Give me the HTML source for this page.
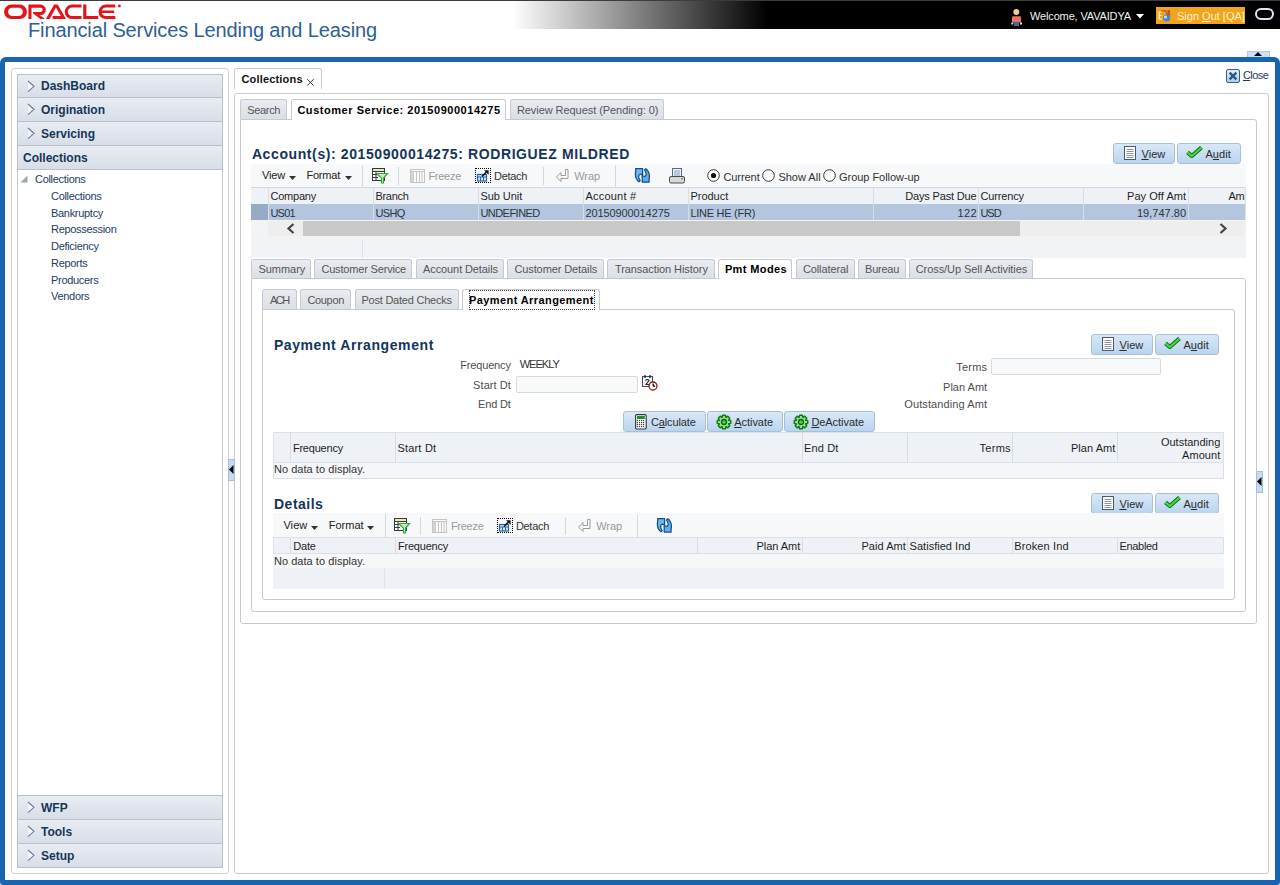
<!DOCTYPE html>
<html><head><meta charset="utf-8">
<style>
*{box-sizing:border-box;margin:0;padding:0}
html,body{width:1280px;height:885px;overflow:hidden;background:#fff;font-family:"Liberation Sans",sans-serif;font-size:11px;color:#333}
.a{position:absolute}
.t{position:absolute;white-space:nowrap;line-height:13px;font-size:11px}
.b{font-weight:bold}
.bx{position:absolute;border:1px solid #c9c9c9}
.hdr{position:absolute;left:17px;width:206px;height:25px;border:1px solid #b7bec8;background:linear-gradient(#e6eaf1,#d8dee8);}
.hdr .tx{position:absolute;left:23px;top:5px;font-weight:bold;font-size:12px;color:#1b3a5e;line-height:14px}
.chev{position:absolute;left:9px;top:6px}
.tree{position:absolute;left:51px;color:#1f3c60;font-size:11px;line-height:13px}
.tab{position:absolute;height:21px;border:1px solid #c3c8cf;border-bottom:none;border-radius:3px 3px 0 0;background:linear-gradient(#e8ebef,#dde1e6);color:#555;font-size:11px;line-height:13px}
.tab span{position:absolute;top:4px;white-space:nowrap}
.tab.sel{background:#fff;color:#000;font-weight:bold}
.btn{position:absolute;height:21px;border:1px solid #a9c0da;border-radius:3px;background:linear-gradient(#dae8f7,#bdd5ef);color:#333}
.btn span{position:absolute;top:4px;white-space:nowrap;line-height:13px}
.u{text-decoration:underline}
.lbl{position:absolute;white-space:nowrap;color:#4a4a4a;line-height:13px;text-align:right}
.gl{position:absolute;background:#d6dbe2}
</style></head><body>
<!-- header -->
<div class="a" style="left:0;top:0;width:1280px;height:1px;background:#3c3c3c"></div>
<div class="a" style="left:512px;top:1px;width:256px;height:28px;background:linear-gradient(90deg,#fff,#000)"></div>
<div class="a" style="left:768px;top:1px;width:512px;height:28px;background:#000"></div>

<svg class="a" style="left:0;top:0" width="130" height="24" viewBox="0 0 130 24">
<g fill="#e0141b">
<path fill-rule="evenodd" d="M11.3,4.6 H19.7 A7.25,7.25 0 0 1 19.7,19.1 H11.3 A7.25,7.25 0 0 1 11.3,4.6 Z M11.4,7.8 A4.15,4.15 0 0 0 11.4,15.9 H19.6 A4.15,4.15 0 0 0 19.6,7.8 Z"/>
<path d="M28.4,4.6 H40.6 A5.25,5.25 0 0 1 40.6,15.1 H39.6 L45,19.1 H40.6 L33,13.4 V11.9 H40.7 A2.05,2.05 0 0 0 40.7,7.8 H31.5 V19.1 H28.4 Z"/>
<path d="M45.9,19.1 L54.1,4.6 H57.7 L66,19.1 H52.6 V15.9 H60.9 L55.9,7.4 L49.6,19.1 Z"/>
<path d="M81.5,4.6 H72 A7.25,7.25 0 0 0 72,19.1 H81.5 V16.1 H72.1 A4.25,4.25 0 0 1 72.1,7.6 H81.5 Z"/>
<path d="M83.2,4.6 H86.4 V16.1 H98.2 V19.1 H83.2 Z"/>
<path d="M115.3,4.6 H105.8 A7.25,7.25 0 0 0 105.8,19.1 H115.3 V16.1 H105.9 A4.25,4.25 0 0 1 101.8,13.1 H114.2 V10.6 H101.8 A4.25,4.25 0 0 1 105.9,7.6 H115.3 Z"/>
<circle cx="119.4" cy="6" r="1.4"/>
</g></svg>
<div class="a" style="left:28px;top:19px;font-size:20px;line-height:22px;letter-spacing:-0.12px;color:#2d6096;white-space:nowrap">Financial Services Lending and Leasing</div>
<svg class="a" style="left:1010px;top:8px" width="14" height="19" viewBox="0 0 14 19">
<circle cx="6.3" cy="4" r="3" fill="#f1cf8a"/><rect x="2" y="8.3" width="9" height="6.2" rx="1" fill="#e8706a"/>
<rect x="4" y="14.4" width="5" height="3.6" fill="#3c6fb0"/><rect x="1.3" y="14.5" width="2" height="2" fill="#f3e3c0"/><rect x="10" y="14.5" width="2" height="2" fill="#f3e3c0"/></svg>
<div class="t" style="left:1030px;top:10px;color:#f2f2f2;font-size:11px;line-height:13px;letter-spacing:-0.15px">Welcome, VAVAIDYA</div>
<svg class="a" style="left:1136px;top:14px" width="8" height="5"><path d="M0,0H8L4,4.5Z" fill="#fff"/></svg>
<div class="a" style="left:1156px;top:7px;width:89px;height:17px;background:#f2a41c"></div>
<svg class="a" style="left:1158px;top:9px" width="14" height="14" viewBox="0 0 14 14">
<path d="M0.5,2.5H4V3.5H2V6H3.5V7H2V9.5H4V10.5H0.5Z" fill="#fff3c8"/><path d="M3,2 L7.5,1.5 L10,7" stroke="#b8501c" stroke-width="1.1" fill="none"/>
<rect x="9.5" y="1" width="2.6" height="8" fill="#c05a2a"/><circle cx="8.5" cy="9" r="3.6" fill="#3d8ad8"/><circle cx="7.4" cy="8" r="1.6" fill="#d8d8d0"/></svg>
<div class="t" style="left:1177px;top:10px;color:#fff2c8;font-size:11px;line-height:13px;letter-spacing:0px">Sign <span class="u">O</span>ut [QA]</div>
<div class="a" style="left:1255px;top:8px;width:19px;height:12px;border:2px solid #d9e8f8;border-radius:6px"></div>
<!-- frame -->
<div class="a" style="left:0;top:57px;width:1280px;height:828px;border:5px solid #1764b0;border-radius:6px 6px 3px 3px"></div>
<div class="a" style="left:1247px;top:51px;width:23px;height:6px;background:#cfe0f4;border:1px solid #b4c8de;border-bottom:none"></div>
<svg class="a" style="left:1254px;top:52px" width="8" height="4"><path d="M0,4H8L4,0Z" fill="#000"/></svg>
<!-- left panel -->
<div class="bx" style="left:11px;top:68px;width:218px;height:806px;border-color:#cfd2d6;border-radius:3px"></div>
<div class="a" style="left:17px;top:74px;width:206px;height:794px;border:1px solid #c2c8d0;border-top:none;border-bottom:none"></div>
<!-- accordion -->
<div class="a" style="left:17px;top:74px;width:206px;height:24px;border-top:1px solid #b9c0ca;border-bottom:1px solid #b9c0ca;border-left:1px solid #b9c0ca;border-right:1px solid #b9c0ca;background:linear-gradient(#e8ecf2,#d8dee8)"></div><svg class="a" style="left:27px;top:80px" width="9" height="13" viewBox="0 0 9 13"><path d="M1,1 L7,6.3 L1,11.6" fill="#f3f7fb" stroke="#667b94" stroke-width="1.1"/></svg><div class="t b" style="left:41px;top:79px;font-size:12px;line-height:14px;color:#163659">DashBoard</div>
<div class="a" style="left:17px;top:97px;width:206px;height:25px;border-top:1px solid #b9c0ca;border-bottom:1px solid #b9c0ca;border-left:1px solid #b9c0ca;border-right:1px solid #b9c0ca;background:linear-gradient(#e8ecf2,#d8dee8)"></div><svg class="a" style="left:27px;top:103px" width="9" height="13" viewBox="0 0 9 13"><path d="M1,1 L7,6.3 L1,11.6" fill="#f3f7fb" stroke="#667b94" stroke-width="1.1"/></svg><div class="t b" style="left:41px;top:103px;font-size:12px;line-height:14px;color:#163659">Origination</div>
<div class="a" style="left:17px;top:121px;width:206px;height:25px;border-top:1px solid #b9c0ca;border-bottom:1px solid #b9c0ca;border-left:1px solid #b9c0ca;border-right:1px solid #b9c0ca;background:linear-gradient(#e8ecf2,#d8dee8)"></div><svg class="a" style="left:27px;top:127px" width="9" height="13" viewBox="0 0 9 13"><path d="M1,1 L7,6.3 L1,11.6" fill="#f3f7fb" stroke="#667b94" stroke-width="1.1"/></svg><div class="t b" style="left:41px;top:127px;font-size:12px;line-height:14px;color:#163659">Servicing</div>
<div class="a" style="left:17px;top:145px;width:206px;height:25px;border-top:1px solid #b9c0ca;border-bottom:1px solid #b9c0ca;border-left:1px solid #b9c0ca;border-right:1px solid #b9c0ca;background:linear-gradient(#e8ecf2,#d8dee8)"></div><div class="t b" style="left:23px;top:151px;font-size:12px;line-height:14px;color:#163659">Collections</div>
<div class="a" style="left:17px;top:795px;width:206px;height:25px;border-top:1px solid #b9c0ca;border-bottom:1px solid #b9c0ca;border-left:1px solid #b9c0ca;border-right:1px solid #b9c0ca;background:linear-gradient(#e8ecf2,#d8dee8)"></div><svg class="a" style="left:27px;top:801px" width="9" height="13" viewBox="0 0 9 13"><path d="M1,1 L7,6.3 L1,11.6" fill="#f3f7fb" stroke="#667b94" stroke-width="1.1"/></svg><div class="t b" style="left:41px;top:801px;font-size:12px;line-height:14px;color:#163659">WFP</div>
<div class="a" style="left:17px;top:819px;width:206px;height:25px;border-top:1px solid #b9c0ca;border-bottom:1px solid #b9c0ca;border-left:1px solid #b9c0ca;border-right:1px solid #b9c0ca;background:linear-gradient(#e8ecf2,#d8dee8)"></div><svg class="a" style="left:27px;top:825px" width="9" height="13" viewBox="0 0 9 13"><path d="M1,1 L7,6.3 L1,11.6" fill="#f3f7fb" stroke="#667b94" stroke-width="1.1"/></svg><div class="t b" style="left:41px;top:825px;font-size:12px;line-height:14px;color:#163659">Tools</div>
<div class="a" style="left:17px;top:843px;width:206px;height:25px;border-top:1px solid #b9c0ca;border-bottom:1px solid #b9c0ca;border-left:1px solid #b9c0ca;border-right:1px solid #b9c0ca;background:linear-gradient(#e8ecf2,#d8dee8)"></div><svg class="a" style="left:27px;top:849px" width="9" height="13" viewBox="0 0 9 13"><path d="M1,1 L7,6.3 L1,11.6" fill="#f3f7fb" stroke="#667b94" stroke-width="1.1"/></svg><div class="t b" style="left:41px;top:849px;font-size:12px;line-height:14px;color:#163659">Setup</div>
<svg class="a" style="left:20px;top:175px" width="8" height="8"><path d="M7.5,0.5V7.5H0.5Z" fill="#9aa7b8"/></svg>
<div class="t" style="left:35px;top:173px;color:#1d3b5f;letter-spacing:-0.3px">Collections</div>
<div class="t" style="left:51px;top:190px;color:#1d3b5f;letter-spacing:-0.3px">Collections</div>
<div class="t" style="left:51px;top:207px;color:#1d3b5f;letter-spacing:-0.3px">Bankruptcy</div>
<div class="t" style="left:51px;top:223px;color:#1d3b5f;letter-spacing:-0.3px">Repossession</div>
<div class="t" style="left:51px;top:240px;color:#1d3b5f;letter-spacing:-0.3px">Deficiency</div>
<div class="t" style="left:51px;top:257px;color:#1d3b5f;letter-spacing:-0.3px">Reports</div>
<div class="t" style="left:51px;top:274px;color:#1d3b5f;letter-spacing:-0.3px">Producers</div>
<div class="t" style="left:51px;top:290px;color:#1d3b5f;letter-spacing:-0.3px">Vendors</div>
<div class="a" style="left:234px;top:68px;width:88px;height:21px;border:1px solid #c9cbce;border-bottom:none;border-radius:3px 3px 0 0;background:#fff"></div>
<div class="a" style="left:241.40px;top:73px;white-space:nowrap;font-size:11px;line-height:13px;color:#111;font-weight:bold;letter-spacing:0.182px;">Collections</div>
<svg class="a" style="left:306px;top:78px" width="9" height="9"><path d="M1.2,1.2L7.6,7.6M7.6,1.2L1.2,7.6" stroke="#333" stroke-width="1"/></svg>
<svg class="a" style="left:1225px;top:68px" width="16" height="16" viewBox="0 0 16 16"><defs><linearGradient id="cg" x1="0" y1="0" x2="0" y2="1"><stop offset="0" stop-color="#e4f0fb"/><stop offset="1" stop-color="#a9cdee"/></linearGradient></defs><rect x="1.5" y="1.5" width="13" height="13" rx="1.5" fill="url(#cg)" stroke="#3d5f86"/><path d="M4.6,4.6L11.4,11.4M11.4,4.6L4.6,11.4" stroke="#2c5a8a" stroke-width="2.4"/></svg>
<div class="a" style="left:1242.90px;top:69px;white-space:nowrap;font-size:11px;line-height:13px;color:#1f3a5c;letter-spacing:-0.555px;"><span class="u">C</span>lose</div>
<div class="a" style="left:234px;top:93px;width:1035px;height:781px;border:1px solid #c9cbce;border-radius:3px"></div>
<div class="a" style="left:240px;top:119px;width:1017px;height:505px;border:1px solid #c6c9cd;border-radius:0 3px 3px 3px"></div>
<div class="a" style="left:240px;top:99px;width:47px;height:20px;border:1px solid #c6c9cd;border-bottom:none;border-radius:3px 3px 0 0;background:linear-gradient(#e9ecf0,#dadfe5)"></div>
<div class="a" style="left:247.20px;top:104px;white-space:nowrap;font-size:11px;line-height:13px;color:#555;letter-spacing:-0.31px;">Search</div>
<div class="a" style="left:291px;top:99px;width:215px;height:21px;border:1px solid #c6c9cd;border-bottom:none;border-radius:3px 3px 0 0;background:#fff"></div>
<div class="a" style="left:297.40px;top:104px;white-space:nowrap;font-size:11px;line-height:13px;color:#000;font-weight:bold;letter-spacing:0.539px;">Customer Service: 20150900014275</div>
<div class="a" style="left:510px;top:99px;width:154px;height:20px;border:1px solid #c6c9cd;border-bottom:none;border-radius:3px 3px 0 0;background:linear-gradient(#e9ecf0,#dadfe5)"></div>
<div class="a" style="left:516.90px;top:104px;white-space:nowrap;font-size:11px;line-height:13px;color:#555;letter-spacing:-0.06px;">Review Request (Pending: 0)</div>
<div class="a" style="left:251.90px;top:146px;white-space:nowrap;font-size:14px;line-height:16px;color:#133559;font-weight:bold;letter-spacing:0.603px;">Account(s): 20150900014275: RODRIGUEZ MILDRED</div>
<div class="a" style="left:1113px;top:143px;width:62px;height:21px;border:1px solid #a7bfd9;border-radius:3px;background:linear-gradient(#d9e8f7,#bad4ef)"></div>
<svg class="a" style="left:1123px;top:145px" width="14" height="16" viewBox="0 0 14 16"><rect x="1.5" y="1.5" width="11" height="13" fill="#fff" stroke="#4a5a70"/><path d="M3.5,4.5H10.5M3.5,6.5H10.5M3.5,8.5H10.5M3.5,10.5H10.5M3.5,12.5H10.5" stroke="#8a94a3" stroke-width="1"/></svg>
<div class="a" style="left:1141.40px;top:148px;white-space:nowrap;font-size:11px;line-height:13px;color:#2b2b2b;letter-spacing:0.085px;"><span class="u">V</span>iew</div>
<div class="a" style="left:1177px;top:143px;width:64px;height:21px;border:1px solid #a7bfd9;border-radius:3px;background:linear-gradient(#d9e8f7,#bad4ef)"></div>
<svg class="a" style="left:1186px;top:146px" width="17" height="12" viewBox="0 0 17 12"><path d="M1.5,6.3 L5.8,10 L15.5,1.5" fill="none" stroke="#137013" stroke-width="4.2" stroke-linejoin="round"/><path d="M1.5,6.3 L5.8,10 L15.5,1.5" fill="none" stroke="#44d644" stroke-width="2.2"/></svg>
<div class="a" style="left:1205.40px;top:148px;white-space:nowrap;font-size:11px;line-height:13px;color:#2b2b2b;letter-spacing:0.107px;">A<span class="u">u</span>dit</div>
<div class="a" style="left:251px;top:164px;width:995px;height:23px;background:#f6f8fa"></div>
<div class="a" style="left:261.90px;top:169px;white-space:nowrap;font-size:11px;line-height:13px;color:#222;letter-spacing:-0.081px;">View</div>
<svg class="a" style="left:289px;top:176px" width="7" height="4"><path d="M0,0H7L3.5,4Z" fill="#333"/></svg>
<div class="a" style="left:306.40px;top:169px;white-space:nowrap;font-size:11px;line-height:13px;color:#222;letter-spacing:-0.187px;">Format</div>
<svg class="a" style="left:345px;top:176px" width="7" height="4"><path d="M0,0H7L3.5,4Z" fill="#333"/></svg>
<div class="a" style="left:362px;top:165px;width:1px;height:22px;background:#d3d8de"></div>
<svg class="a" style="left:372px;top:168px" width="17" height="16" viewBox="0 0 17 16"><rect x="0.5" y="0.5" width="12" height="12" fill="#fff" stroke="#333a44"/><rect x="1" y="1" width="11" height="2.5" fill="#f2e6b0"/><path d="M0.5,3.5H12.5M0.5,6.5H6M0.5,9.5H6M4,3.5V12.5" stroke="#333a44"/><path d="M4.5,5.5H15.5L11.5,10V15H9.5V10Z" fill="#c7ecc7" stroke="#3aa53a" stroke-width="1.2"/></svg>
<div class="a" style="left:398px;top:167px;width:1px;height:18px;background:#d3d8de"></div>
<svg class="a" style="left:410px;top:169px" width="15" height="14" viewBox="0 0 15 14"><rect x="0.5" y="0.5" width="14" height="13" fill="#fbfbfb" stroke="#c4c4c4"/><path d="M0.5,2.5H14.5M3.5,2.5V13.5M6.5,2.5V13.5M9.5,2.5V13.5M12,2.5V13.5" stroke="#c4c4c4"/><rect x="1" y="3" width="2.5" height="10" fill="#d6d6d6"/></svg>
<div class="a" style="left:428.40px;top:170px;white-space:nowrap;font-size:11px;line-height:13px;color:#9a9a9a;letter-spacing:-0.267px;">Freeze</div>
<div class="a" style="left:475px;top:168px;width:16px;height:15px;border:1px dotted #000"></div>
<svg class="a" style="left:475px;top:168px" width="16" height="15" viewBox="0 0 16 15"><rect x="2.5" y="6.5" width="9" height="6.5" fill="#cfe4f8" stroke="#2a66a6" stroke-width="1.2"/><path d="M2.5,9H11.5M5.5,9V13M8.5,9V13" stroke="#2a66a6" stroke-width="1"/><path d="M7,8.5 L12.2,3.3" stroke="#111" stroke-width="1.6"/><path d="M9,2.2H13.6V6.8Z" fill="#111"/></svg>
<div class="a" style="left:494.00px;top:170px;white-space:nowrap;font-size:11px;line-height:13px;color:#333;letter-spacing:-0.29px;">Detach</div>
<div class="a" style="left:543px;top:167px;width:1px;height:18px;background:#d3d8de"></div>
<svg class="a" style="left:555px;top:168px" width="15" height="15" viewBox="0 0 15 15"><path d="M10.5,1.5H13V10.5H6V13.5L1.5,9L6,4.5V7.5H10.5Z" fill="#fafafa" stroke="#9a9a9a" stroke-width="1"/></svg>
<div class="a" style="left:574.20px;top:170px;white-space:nowrap;font-size:11px;line-height:13px;color:#9a9a9a;letter-spacing:-0.06px;">Wrap</div>
<div class="a" style="left:615px;top:165px;width:1px;height:22px;background:#d3d8de"></div>
<svg class="a" style="left:634px;top:167px" width="17" height="17" viewBox="-1 -1 17 17"><path d="M0.6,0.6 H7.6 V7.2 C6,5.6 3.6,6 3.6,8.6 C3.6,10.4 4.6,11.8 5.2,12.6 L4,13.8 C1.4,11.8 0.4,9 0.4,6.2 C0.4,3.6 1.2,2.2 0.6,0.6 Z" fill="#6cb6f2" stroke="#134f8c" stroke-width="1.25" stroke-linejoin="round"/><path d="M0.6,0.6 H7.6 V7.2 C6,5.6 3.6,6 3.6,8.6 C3.6,10.4 4.6,11.8 5.2,12.6 L4,13.8 C1.4,11.8 0.4,9 0.4,6.2 C0.4,3.6 1.2,2.2 0.6,0.6 Z" transform="rotate(180 7.4 7.3)" fill="#5eaef0" stroke="#134f8c" stroke-width="1.25" stroke-linejoin="round"/></svg>
<svg class="a" style="left:669px;top:168px" width="16" height="16" viewBox="0 0 16 16"><rect x="3.5" y="0.5" width="9" height="8" fill="#eef3fa" stroke="#5a6878"/><path d="M5,3H11M5,5H11M5,7H11" stroke="#7b9cc4"/><rect x="0.5" y="8.5" width="15" height="6.5" rx="1.5" fill="#d8d8d8" stroke="#4a4a4a"/><rect x="12" y="10" width="2" height="1.5" fill="#3fbf3f"/></svg>
<svg class="a" style="left:707px;top:169px" width="13" height="13"><circle cx="6.5" cy="6.5" r="5.8" fill="#fff" stroke="#333" stroke-width="1"/><circle cx="6.5" cy="6.5" r="2.6" fill="#111"/></svg>
<div class="a" style="left:723.40px;top:171px;white-space:nowrap;font-size:11px;line-height:13px;color:#333;letter-spacing:-0.063px;">Current</div>
<svg class="a" style="left:762px;top:169px" width="13" height="13"><circle cx="6.5" cy="6.5" r="5.8" fill="#fff" stroke="#333" stroke-width="1"/></svg>
<div class="a" style="left:778.40px;top:171px;white-space:nowrap;font-size:11px;line-height:13px;color:#333;letter-spacing:0.001px;">Show All</div>
<svg class="a" style="left:823px;top:169px" width="13" height="13"><circle cx="6.5" cy="6.5" r="5.8" fill="#fff" stroke="#333" stroke-width="1"/></svg>
<div class="a" style="left:839.10px;top:171px;white-space:nowrap;font-size:11px;line-height:13px;color:#333;letter-spacing:-0.051px;">Group Follow-up</div>
<div class="a" style="left:251px;top:187px;width:995px;height:17px;background:#eef2f7;border-top:1px solid #d3d8de"></div>
<div class="a" style="left:251px;top:204px;width:995px;height:16px;background:#b3c6dd"></div>
<div class="a" style="left:251px;top:204px;width:17px;height:16px;background:#97abc4"></div>
<div class="a" style="left:268px;top:187px;width:1px;height:17px;background:#d8dde4"></div>
<div class="a" style="left:268px;top:204px;width:1px;height:16px;background:#d5dfea"></div>
<div class="a" style="left:373px;top:187px;width:1px;height:17px;background:#d8dde4"></div>
<div class="a" style="left:373px;top:204px;width:1px;height:16px;background:#d5dfea"></div>
<div class="a" style="left:478px;top:187px;width:1px;height:17px;background:#d8dde4"></div>
<div class="a" style="left:478px;top:204px;width:1px;height:16px;background:#d5dfea"></div>
<div class="a" style="left:583px;top:187px;width:1px;height:17px;background:#d8dde4"></div>
<div class="a" style="left:583px;top:204px;width:1px;height:16px;background:#d5dfea"></div>
<div class="a" style="left:688px;top:187px;width:1px;height:17px;background:#d8dde4"></div>
<div class="a" style="left:688px;top:204px;width:1px;height:16px;background:#d5dfea"></div>
<div class="a" style="left:873px;top:187px;width:1px;height:17px;background:#d8dde4"></div>
<div class="a" style="left:873px;top:204px;width:1px;height:16px;background:#d5dfea"></div>
<div class="a" style="left:978px;top:187px;width:1px;height:17px;background:#d8dde4"></div>
<div class="a" style="left:978px;top:204px;width:1px;height:16px;background:#d5dfea"></div>
<div class="a" style="left:1083px;top:187px;width:1px;height:17px;background:#d8dde4"></div>
<div class="a" style="left:1083px;top:204px;width:1px;height:16px;background:#d5dfea"></div>
<div class="a" style="left:1188px;top:187px;width:1px;height:17px;background:#d8dde4"></div>
<div class="a" style="left:1188px;top:204px;width:1px;height:16px;background:#d5dfea"></div>
<div class="a" style="left:270.40px;top:190px;white-space:nowrap;font-size:11px;line-height:13px;color:#1e1e1e;letter-spacing:-0.196px;">Company</div>
<div class="a" style="left:375.40px;top:190px;white-space:nowrap;font-size:11px;line-height:13px;color:#1e1e1e;letter-spacing:-0.27px;">Branch</div>
<div class="a" style="left:480.40px;top:190px;white-space:nowrap;font-size:11px;line-height:13px;color:#1e1e1e;letter-spacing:-0.056px;">Sub Unit</div>
<div class="a" style="left:585.40px;top:190px;white-space:nowrap;font-size:11px;line-height:13px;color:#1e1e1e;letter-spacing:0.216px;">Account #</div>
<div class="a" style="left:690.40px;top:190px;white-space:nowrap;font-size:11px;line-height:13px;color:#1e1e1e;letter-spacing:-0.001px;">Product</div>
<div class="a" style="left:276.43px;top:190px;width:700px;text-align:right;white-space:nowrap;font-size:11px;line-height:13px;color:#1e1e1e;letter-spacing:-0.172px;">Days Past Due</div>
<div class="a" style="left:980.40px;top:190px;white-space:nowrap;font-size:11px;line-height:13px;color:#1e1e1e;letter-spacing:-0.131px;">Currency</div>
<div class="a" style="left:486.16px;top:190px;width:700px;text-align:right;white-space:nowrap;font-size:11px;line-height:13px;color:#1e1e1e;letter-spacing:0.061px;">Pay Off Amt</div>
<div class="a" style="left:1228.40px;top:190px;white-space:nowrap;font-size:11px;line-height:13px;color:#1e1e1e;letter-spacing:-0.2px;">Am</div>
<div class="a" style="left:270.40px;top:207px;white-space:nowrap;font-size:11px;line-height:13px;color:#2e3440;letter-spacing:-0.739px;">US01</div>
<div class="a" style="left:375.40px;top:207px;white-space:nowrap;font-size:11px;line-height:13px;color:#2e3440;letter-spacing:-0.627px;">USHQ</div>
<div class="a" style="left:480.40px;top:207px;white-space:nowrap;font-size:11px;line-height:13px;color:#2e3440;letter-spacing:-0.534px;">UNDEFINED</div>
<div class="a" style="left:585.40px;top:207px;white-space:nowrap;font-size:11px;line-height:13px;color:#2e3440;letter-spacing:-0.095px;">20150900014275</div>
<div class="a" style="left:690.40px;top:207px;white-space:nowrap;font-size:11px;line-height:13px;color:#2e3440;letter-spacing:-0.267px;">LINE HE (FR)</div>
<div class="a" style="left:980.40px;top:207px;white-space:nowrap;font-size:11px;line-height:13px;color:#2e3440;letter-spacing:-0.963px;">USD</div>
<div class="a" style="left:277.00px;top:207px;width:700px;text-align:right;white-space:nowrap;font-size:11px;line-height:13px;color:#2e3440;letter-spacing:0.4px;">122</div>
<div class="a" style="left:486.13px;top:207px;width:700px;text-align:right;white-space:nowrap;font-size:11px;line-height:13px;color:#2e3440;letter-spacing:0.033px;">19,747.80</div>
<div class="a" style="left:1246px;top:185px;width:9px;height:40px;background:#fff"></div>
<div class="a" style="left:1245px;top:187px;width:1px;height:71px;background:#dde1e6"></div>
<div class="a" style="left:251px;top:220px;width:995px;height:16px;background:#f3f4f6"></div>
<div class="a" style="left:268px;top:221px;width:977px;height:15px;background:#eeeeee"></div>
<div class="a" style="left:303px;top:221px;width:717px;height:15px;background:#c8c8c8"></div>
<svg class="a" style="left:286px;top:223px" width="9" height="11"><path d="M7.5,1L2.5,5.5L7.5,10" fill="none" stroke="#444" stroke-width="2.2"/></svg>
<svg class="a" style="left:1219px;top:223px" width="9" height="11"><path d="M1.5,1L6.5,5.5L1.5,10" fill="none" stroke="#444" stroke-width="2.2"/></svg>
<div class="a" style="left:251px;top:236px;width:995px;height:22px;background:#f1f3f7"></div>
<div class="a" style="left:362px;top:240px;width:1px;height:18px;background:#dfe3e8"></div>
<div class="a" style="left:251px;top:278px;width:995px;height:334px;border:1px solid #c6c9cd;border-radius:0 3px 3px 3px"></div>
<div class="a" style="left:251px;top:259px;width:60px;height:19px;border:1px solid #c6c9cd;border-bottom:none;border-radius:3px 3px 0 0;background:linear-gradient(#e9ecf0,#dadfe5)"></div>
<div class="a" style="left:258.40px;top:263px;white-space:nowrap;font-size:11px;line-height:13px;color:#555;letter-spacing:-0.027px;">Summary</div>
<div class="a" style="left:314px;top:259px;width:98px;height:19px;border:1px solid #c6c9cd;border-bottom:none;border-radius:3px 3px 0 0;background:linear-gradient(#e9ecf0,#dadfe5)"></div>
<div class="a" style="left:321.40px;top:263px;white-space:nowrap;font-size:11px;line-height:13px;color:#555;letter-spacing:-0.174px;">Customer Service</div>
<div class="a" style="left:416px;top:259px;width:88px;height:19px;border:1px solid #c6c9cd;border-bottom:none;border-radius:3px 3px 0 0;background:linear-gradient(#e9ecf0,#dadfe5)"></div>
<div class="a" style="left:423.10px;top:263px;white-space:nowrap;font-size:11px;line-height:13px;color:#555;letter-spacing:-0.109px;">Account Details</div>
<div class="a" style="left:507px;top:259px;width:97px;height:19px;border:1px solid #c6c9cd;border-bottom:none;border-radius:3px 3px 0 0;background:linear-gradient(#e9ecf0,#dadfe5)"></div>
<div class="a" style="left:514.40px;top:263px;white-space:nowrap;font-size:11px;line-height:13px;color:#555;letter-spacing:-0.097px;">Customer Details</div>
<div class="a" style="left:607px;top:259px;width:108px;height:19px;border:1px solid #c6c9cd;border-bottom:none;border-radius:3px 3px 0 0;background:linear-gradient(#e9ecf0,#dadfe5)"></div>
<div class="a" style="left:614.90px;top:263px;white-space:nowrap;font-size:11px;line-height:13px;color:#555;letter-spacing:-0.074px;">Transaction History</div>
<div class="a" style="left:718px;top:259px;width:74px;height:20px;border:1px solid #c6c9cd;border-bottom:none;border-radius:3px 3px 0 0;background:#fff"></div>
<div class="a" style="left:724.90px;top:263px;white-space:nowrap;font-size:11px;line-height:13px;color:#000;font-weight:bold;letter-spacing:0.379px;">Pmt Modes</div>
<div class="a" style="left:796px;top:259px;width:59px;height:19px;border:1px solid #c6c9cd;border-bottom:none;border-radius:3px 3px 0 0;background:linear-gradient(#e9ecf0,#dadfe5)"></div>
<div class="a" style="left:802.90px;top:263px;white-space:nowrap;font-size:11px;line-height:13px;color:#555;letter-spacing:-0.096px;">Collateral</div>
<div class="a" style="left:858px;top:259px;width:48px;height:19px;border:1px solid #c6c9cd;border-bottom:none;border-radius:3px 3px 0 0;background:linear-gradient(#e9ecf0,#dadfe5)"></div>
<div class="a" style="left:865.10px;top:263px;white-space:nowrap;font-size:11px;line-height:13px;color:#555;letter-spacing:-0.254px;">Bureau</div>
<div class="a" style="left:909px;top:259px;width:124px;height:19px;border:1px solid #c6c9cd;border-bottom:none;border-radius:3px 3px 0 0;background:linear-gradient(#e9ecf0,#dadfe5)"></div>
<div class="a" style="left:915.70px;top:263px;white-space:nowrap;font-size:11px;line-height:13px;color:#555;letter-spacing:-0.065px;">Cross/Up Sell Activities</div>
<div class="a" style="left:262px;top:309px;width:973px;height:291px;border:1px solid #c6c9cd;border-radius:0 3px 3px 3px"></div>
<div class="a" style="left:262px;top:289px;width:35px;height:20px;border:1px solid #c6c9cd;border-bottom:none;border-radius:3px 3px 0 0;background:linear-gradient(#e9ecf0,#dadfe5)"></div>
<div class="a" style="left:269.90px;top:294px;white-space:nowrap;font-size:11px;line-height:13px;color:#555;letter-spacing:-1.413px;">ACH</div>
<div class="a" style="left:300px;top:289px;width:51px;height:20px;border:1px solid #c6c9cd;border-bottom:none;border-radius:3px 3px 0 0;background:linear-gradient(#e9ecf0,#dadfe5)"></div>
<div class="a" style="left:307.40px;top:294px;white-space:nowrap;font-size:11px;line-height:13px;color:#555;letter-spacing:-0.326px;">Coupon</div>
<div class="a" style="left:355px;top:289px;width:104px;height:20px;border:1px solid #c6c9cd;border-bottom:none;border-radius:3px 3px 0 0;background:linear-gradient(#e9ecf0,#dadfe5)"></div>
<div class="a" style="left:361.40px;top:294px;white-space:nowrap;font-size:11px;line-height:13px;color:#555;letter-spacing:-0.216px;">Post Dated Checks</div>
<div class="a" style="left:462px;top:289px;width:138px;height:21px;border:1px solid #c6c9cd;border-bottom:none;border-radius:3px 3px 0 0;background:#fff"></div>
<div class="a" style="left:469.00px;top:294px;white-space:nowrap;font-size:11px;line-height:13px;color:#000;font-weight:bold;letter-spacing:0.408px;">Payment Arrangement</div>
<div class="a" style="left:469px;top:290px;width:126px;height:20px;border:1px dotted #444"></div>
<div class="a" style="left:273.90px;top:337px;white-space:nowrap;font-size:14px;line-height:16px;color:#133559;font-weight:bold;letter-spacing:0.586px;">Payment Arrangement</div>
<div class="a" style="left:1091px;top:334px;width:62px;height:21px;border:1px solid #a7bfd9;border-radius:3px;background:linear-gradient(#d9e8f7,#bad4ef)"></div>
<svg class="a" style="left:1101px;top:336px" width="14" height="16" viewBox="0 0 14 16"><rect x="1.5" y="1.5" width="11" height="13" fill="#fff" stroke="#4a5a70"/><path d="M3.5,4.5H10.5M3.5,6.5H10.5M3.5,8.5H10.5M3.5,10.5H10.5M3.5,12.5H10.5" stroke="#8a94a3" stroke-width="1"/></svg>
<div class="a" style="left:1119.40px;top:339px;white-space:nowrap;font-size:11px;line-height:13px;color:#2b2b2b;letter-spacing:0.085px;"><span class="u">V</span>iew</div>
<div class="a" style="left:1155px;top:334px;width:64px;height:21px;border:1px solid #a7bfd9;border-radius:3px;background:linear-gradient(#d9e8f7,#bad4ef)"></div>
<svg class="a" style="left:1164px;top:337px" width="17" height="12" viewBox="0 0 17 12"><path d="M1.5,6.3 L5.8,10 L15.5,1.5" fill="none" stroke="#137013" stroke-width="4.2" stroke-linejoin="round"/><path d="M1.5,6.3 L5.8,10 L15.5,1.5" fill="none" stroke="#44d644" stroke-width="2.2"/></svg>
<div class="a" style="left:1183.40px;top:339px;white-space:nowrap;font-size:11px;line-height:13px;color:#2b2b2b;letter-spacing:0.107px;">A<span class="u">u</span>dit</div>
<div class="a" style="left:-189.27px;top:359px;width:700px;text-align:right;white-space:nowrap;font-size:11px;line-height:13px;color:#4d4d4d;letter-spacing:-0.171px;">Frequency</div>
<div class="a" style="left:519.70px;top:358px;white-space:nowrap;font-size:11px;line-height:13px;color:#333;letter-spacing:-0.987px;">WEEKLY</div>
<div class="a" style="left:-189.03px;top:379px;width:700px;text-align:right;white-space:nowrap;font-size:11px;line-height:13px;color:#4d4d4d;letter-spacing:0.073px;">Start Dt</div>
<div class="a" style="left:516px;top:376px;width:122px;height:17px;border:1px solid #d5dade;background:#f7f9fb;border-radius:2px"></div>
<svg class="a" style="left:641px;top:374px" width="17" height="17" viewBox="0 0 17 17"><rect x="1.5" y="2.5" width="10" height="10" fill="#eef3fb" stroke="#3b4a5e"/><path d="M4,1V4M9,1V4" stroke="#222" stroke-width="1.3"/><path d="M4.5,6.5Q6.5,4.5 8,6.5L5,10.5H8" fill="none" stroke="#222" stroke-width="1.1"/><circle cx="12" cy="12" r="4" fill="#fff" stroke="#8b1a10" stroke-width="1.3"/><path d="M12,9.5V12.3H14" stroke="#222" stroke-width="1"/></svg>
<div class="a" style="left:-189.27px;top:398px;width:700px;text-align:right;white-space:nowrap;font-size:11px;line-height:13px;color:#4d4d4d;letter-spacing:-0.166px;">End Dt</div>
<div class="a" style="left:287.31px;top:361px;width:700px;text-align:right;white-space:nowrap;font-size:11px;line-height:13px;color:#4d4d4d;letter-spacing:0.214px;">Terms</div>
<div class="a" style="left:991px;top:358px;width:170px;height:17px;border:1px solid #d5dade;background:#f7f9fb;border-radius:2px"></div>
<div class="a" style="left:287.10px;top:381px;width:700px;text-align:right;white-space:nowrap;font-size:11px;line-height:13px;color:#4d4d4d;letter-spacing:-0.003px;">Plan Amt</div>
<div class="a" style="left:287.21px;top:398px;width:700px;text-align:right;white-space:nowrap;font-size:11px;line-height:13px;color:#4d4d4d;letter-spacing:0.106px;">Outstanding Amt</div>
<div class="a" style="left:623px;top:411px;width:83px;height:21px;border:1px solid #a7bfd9;border-radius:3px;background:linear-gradient(#d9e8f7,#bad4ef)"></div>
<svg class="a" style="left:635px;top:413.5px" width="12" height="16" viewBox="0 0 12 16"><rect x="0.6" y="0.6" width="10.6" height="14.4" rx="1.2" fill="#fbfbf8" stroke="#333" stroke-width="1.1"/><rect x="2" y="2" width="7.8" height="3" fill="#1f8f2f"/><circle cx="2.40" cy="6.40" r="0.7" fill="#444"/><circle cx="2.40" cy="8.45" r="0.7" fill="#444"/><circle cx="2.40" cy="10.50" r="0.7" fill="#444"/><circle cx="2.40" cy="12.55" r="0.7" fill="#444"/><circle cx="4.45" cy="6.40" r="0.7" fill="#444"/><circle cx="4.45" cy="8.45" r="0.7" fill="#444"/><circle cx="4.45" cy="10.50" r="0.7" fill="#444"/><circle cx="4.45" cy="12.55" r="0.7" fill="#444"/><circle cx="6.50" cy="6.40" r="0.7" fill="#444"/><circle cx="6.50" cy="8.45" r="0.7" fill="#444"/><circle cx="6.50" cy="10.50" r="0.7" fill="#444"/><circle cx="6.50" cy="12.55" r="0.7" fill="#444"/><circle cx="8.55" cy="6.40" r="0.7" fill="#444"/><circle cx="8.55" cy="8.45" r="0.7" fill="#444"/><circle cx="8.55" cy="10.50" r="0.7" fill="#444"/><circle cx="8.55" cy="12.55" r="0.7" fill="#444"/></svg>
<div class="a" style="left:650.90px;top:416px;white-space:nowrap;font-size:11px;line-height:13px;color:#2b2b2b;letter-spacing:-0.107px;">C<span class="u">a</span>lculate</div>
<div class="a" style="left:707px;top:411px;width:76px;height:21px;border:1px solid #a7bfd9;border-radius:3px;background:linear-gradient(#d9e8f7,#bad4ef)"></div>
<svg class="a" style="left:715.5px;top:413.5px" width="16" height="16" viewBox="0 0 16 16"><polygon points="5.96,3.43 6.63,1.24 9.37,1.24 10.04,3.43 9.79,3.33 11.81,2.25 13.75,4.19 12.67,6.21 12.57,5.96 14.76,6.63 14.76,9.37 12.57,10.04 12.67,9.79 13.75,11.81 11.81,13.75 9.79,12.67 10.04,12.57 9.37,14.76 6.63,14.76 5.96,12.57 6.21,12.67 4.19,13.75 2.25,11.81 3.33,9.79 3.43,10.04 1.24,9.37 1.24,6.63 3.43,5.96 3.33,6.21 2.25,4.19 4.19,2.25 6.21,3.33" fill="#93e693" stroke="#0f7a0f" stroke-width="1.5" stroke-linejoin="round"/><circle cx="8" cy="8" r="2.5" fill="#5fbf5f" stroke="#0f6a0f" stroke-width="1.3"/></svg>
<div class="a" style="left:734.20px;top:416px;white-space:nowrap;font-size:11px;line-height:13px;color:#2b2b2b;letter-spacing:-0.033px;"><span class="u">A</span>ctivate</div>
<div class="a" style="left:784px;top:411px;width:91px;height:21px;border:1px solid #a7bfd9;border-radius:3px;background:linear-gradient(#d9e8f7,#bad4ef)"></div>
<svg class="a" style="left:792.5px;top:413.5px" width="16" height="16" viewBox="0 0 16 16"><polygon points="5.96,3.43 6.63,1.24 9.37,1.24 10.04,3.43 9.79,3.33 11.81,2.25 13.75,4.19 12.67,6.21 12.57,5.96 14.76,6.63 14.76,9.37 12.57,10.04 12.67,9.79 13.75,11.81 11.81,13.75 9.79,12.67 10.04,12.57 9.37,14.76 6.63,14.76 5.96,12.57 6.21,12.67 4.19,13.75 2.25,11.81 3.33,9.79 3.43,10.04 1.24,9.37 1.24,6.63 3.43,5.96 3.33,6.21 2.25,4.19 4.19,2.25 6.21,3.33" fill="#93e693" stroke="#0f7a0f" stroke-width="1.5" stroke-linejoin="round"/><circle cx="8" cy="8" r="2.5" fill="#5fbf5f" stroke="#0f6a0f" stroke-width="1.3"/></svg>
<div class="a" style="left:811.40px;top:416px;white-space:nowrap;font-size:11px;line-height:13px;color:#2b2b2b;letter-spacing:-0.06px;"><span class="u">D</span>eActivate</div>
<div class="a" style="left:273px;top:432px;width:951px;height:31px;background:#eef2f7;border:1px solid #dbe0e6"></div>
<div class="a" style="left:273px;top:462px;width:951px;height:17px;background:#f4f6f9;border:1px solid #dbe0e6"></div>
<div class="a" style="left:290px;top:433px;width:1px;height:29px;background:#d8dde4"></div>
<div class="a" style="left:395px;top:433px;width:1px;height:29px;background:#d8dde4"></div>
<div class="a" style="left:802px;top:433px;width:1px;height:29px;background:#d8dde4"></div>
<div class="a" style="left:907px;top:433px;width:1px;height:29px;background:#d8dde4"></div>
<div class="a" style="left:1012px;top:433px;width:1px;height:29px;background:#d8dde4"></div>
<div class="a" style="left:1117px;top:433px;width:1px;height:29px;background:#d8dde4"></div>
<div class="a" style="left:292.90px;top:442px;white-space:nowrap;font-size:11px;line-height:13px;color:#1e1e1e;letter-spacing:-0.208px;">Frequency</div>
<div class="a" style="left:397.40px;top:442px;white-space:nowrap;font-size:11px;line-height:13px;color:#1e1e1e;letter-spacing:0.202px;">Start Dt</div>
<div class="a" style="left:804.10px;top:442px;white-space:nowrap;font-size:11px;line-height:13px;color:#1e1e1e;letter-spacing:0.114px;">End Dt</div>
<div class="a" style="left:310.89px;top:442px;width:700px;text-align:right;white-space:nowrap;font-size:11px;line-height:13px;color:#1e1e1e;letter-spacing:0.289px;">Terms</div>
<div class="a" style="left:415.47px;top:442px;width:700px;text-align:right;white-space:nowrap;font-size:11px;line-height:13px;color:#1e1e1e;letter-spacing:0.068px;">Plan Amt</div>
<div class="a" style="left:520.31px;top:436px;width:700px;text-align:right;white-space:nowrap;font-size:11px;line-height:13px;color:#1e1e1e;letter-spacing:0.008px;">Outstanding</div>
<div class="a" style="left:520.38px;top:449px;width:700px;text-align:right;white-space:nowrap;font-size:11px;line-height:13px;color:#1e1e1e;letter-spacing:0.078px;">Amount</div>
<div class="a" style="left:273.90px;top:463px;white-space:nowrap;font-size:11px;line-height:13px;color:#333;letter-spacing:0.048px;">No data to display.</div>
<div class="a" style="left:274.00px;top:496px;white-space:nowrap;font-size:14px;line-height:16px;color:#133559;font-weight:bold;letter-spacing:0.499px;">Details</div>
<div class="a" style="left:1091px;top:493px;width:62px;height:21px;border:1px solid #a7bfd9;border-radius:3px;background:linear-gradient(#d9e8f7,#bad4ef)"></div>
<svg class="a" style="left:1101px;top:495px" width="14" height="16" viewBox="0 0 14 16"><rect x="1.5" y="1.5" width="11" height="13" fill="#fff" stroke="#4a5a70"/><path d="M3.5,4.5H10.5M3.5,6.5H10.5M3.5,8.5H10.5M3.5,10.5H10.5M3.5,12.5H10.5" stroke="#8a94a3" stroke-width="1"/></svg>
<div class="a" style="left:1119.40px;top:498px;white-space:nowrap;font-size:11px;line-height:13px;color:#2b2b2b;letter-spacing:0.085px;"><span class="u">V</span>iew</div>
<div class="a" style="left:1155px;top:493px;width:64px;height:21px;border:1px solid #a7bfd9;border-radius:3px;background:linear-gradient(#d9e8f7,#bad4ef)"></div>
<svg class="a" style="left:1164px;top:496px" width="17" height="12" viewBox="0 0 17 12"><path d="M1.5,6.3 L5.8,10 L15.5,1.5" fill="none" stroke="#137013" stroke-width="4.2" stroke-linejoin="round"/><path d="M1.5,6.3 L5.8,10 L15.5,1.5" fill="none" stroke="#44d644" stroke-width="2.2"/></svg>
<div class="a" style="left:1183.40px;top:498px;white-space:nowrap;font-size:11px;line-height:13px;color:#2b2b2b;letter-spacing:0.107px;">A<span class="u">u</span>dit</div>
<div class="a" style="left:273px;top:513px;width:951px;height:24px;background:#f6f8fa"></div>
<div class="a" style="left:283.40px;top:519px;white-space:nowrap;font-size:11px;line-height:13px;color:#222;letter-spacing:0.085px;">View</div>
<svg class="a" style="left:311px;top:526px" width="7" height="4"><path d="M0,0H7L3.5,4Z" fill="#333"/></svg>
<div class="a" style="left:328.70px;top:519px;white-space:nowrap;font-size:11px;line-height:13px;color:#222;letter-spacing:0.013px;">Format</div>
<svg class="a" style="left:367px;top:526px" width="7" height="4"><path d="M0,0H7L3.5,4Z" fill="#333"/></svg>
<div class="a" style="left:385px;top:514px;width:1px;height:23px;background:#d3d8de"></div>
<svg class="a" style="left:394px;top:518px" width="17" height="16" viewBox="0 0 17 16"><rect x="0.5" y="0.5" width="12" height="12" fill="#fff" stroke="#333a44"/><rect x="1" y="1" width="11" height="2.5" fill="#f2e6b0"/><path d="M0.5,3.5H12.5M0.5,6.5H6M0.5,9.5H6M4,3.5V12.5" stroke="#333a44"/><path d="M4.5,5.5H15.5L11.5,10V15H9.5V10Z" fill="#c7ecc7" stroke="#3aa53a" stroke-width="1.2"/></svg>
<div class="a" style="left:420px;top:517px;width:1px;height:18px;background:#d3d8de"></div>
<svg class="a" style="left:432px;top:519px" width="15" height="14" viewBox="0 0 15 14"><rect x="0.5" y="0.5" width="14" height="13" fill="#fbfbfb" stroke="#c4c4c4"/><path d="M0.5,2.5H14.5M3.5,2.5V13.5M6.5,2.5V13.5M9.5,2.5V13.5M12,2.5V13.5" stroke="#c4c4c4"/><rect x="1" y="3" width="2.5" height="10" fill="#d6d6d6"/></svg>
<div class="a" style="left:450.90px;top:520px;white-space:nowrap;font-size:11px;line-height:13px;color:#9a9a9a;letter-spacing:-0.267px;">Freeze</div>
<div class="a" style="left:497px;top:518px;width:16px;height:15px;border:1px dotted #000"></div>
<svg class="a" style="left:497px;top:518px" width="16" height="15" viewBox="0 0 16 15"><rect x="2.5" y="6.5" width="9" height="6.5" fill="#cfe4f8" stroke="#2a66a6" stroke-width="1.2"/><path d="M2.5,9H11.5M5.5,9V13M8.5,9V13" stroke="#2a66a6" stroke-width="1"/><path d="M7,8.5 L12.2,3.3" stroke="#111" stroke-width="1.6"/><path d="M9,2.2H13.6V6.8Z" fill="#111"/></svg>
<div class="a" style="left:515.90px;top:520px;white-space:nowrap;font-size:11px;line-height:13px;color:#333;letter-spacing:-0.29px;">Detach</div>
<div class="a" style="left:565px;top:517px;width:1px;height:18px;background:#d3d8de"></div>
<svg class="a" style="left:577px;top:518px" width="15" height="15" viewBox="0 0 15 15"><path d="M10.5,1.5H13V10.5H6V13.5L1.5,9L6,4.5V7.5H10.5Z" fill="#fafafa" stroke="#9a9a9a" stroke-width="1"/></svg>
<div class="a" style="left:596.20px;top:520px;white-space:nowrap;font-size:11px;line-height:13px;color:#9a9a9a;letter-spacing:-0.06px;">Wrap</div>
<div class="a" style="left:637px;top:515px;width:1px;height:22px;background:#d3d8de"></div>
<svg class="a" style="left:656px;top:517px" width="17" height="17" viewBox="-1 -1 17 17"><path d="M0.6,0.6 H7.6 V7.2 C6,5.6 3.6,6 3.6,8.6 C3.6,10.4 4.6,11.8 5.2,12.6 L4,13.8 C1.4,11.8 0.4,9 0.4,6.2 C0.4,3.6 1.2,2.2 0.6,0.6 Z" fill="#6cb6f2" stroke="#134f8c" stroke-width="1.25" stroke-linejoin="round"/><path d="M0.6,0.6 H7.6 V7.2 C6,5.6 3.6,6 3.6,8.6 C3.6,10.4 4.6,11.8 5.2,12.6 L4,13.8 C1.4,11.8 0.4,9 0.4,6.2 C0.4,3.6 1.2,2.2 0.6,0.6 Z" transform="rotate(180 7.4 7.3)" fill="#5eaef0" stroke="#134f8c" stroke-width="1.25" stroke-linejoin="round"/></svg>
<div class="a" style="left:273px;top:537px;width:951px;height:17px;background:#eef2f7;border:1px solid #dbe0e6"></div>
<div class="a" style="left:290px;top:538px;width:1px;height:16px;background:#d8dde4"></div>
<div class="a" style="left:395px;top:538px;width:1px;height:16px;background:#d8dde4"></div>
<div class="a" style="left:697px;top:538px;width:1px;height:16px;background:#d8dde4"></div>
<div class="a" style="left:802px;top:538px;width:1px;height:16px;background:#d8dde4"></div>
<div class="a" style="left:907px;top:538px;width:1px;height:16px;background:#d8dde4"></div>
<div class="a" style="left:1012px;top:538px;width:1px;height:16px;background:#d8dde4"></div>
<div class="a" style="left:1117px;top:538px;width:1px;height:16px;background:#d8dde4"></div>
<div class="a" style="left:293.20px;top:540px;white-space:nowrap;font-size:11px;line-height:13px;color:#1e1e1e;letter-spacing:-0.145px;">Date</div>
<div class="a" style="left:397.90px;top:540px;white-space:nowrap;font-size:11px;line-height:13px;color:#1e1e1e;letter-spacing:-0.196px;">Frequency</div>
<div class="a" style="left:100.15px;top:540px;width:700px;text-align:right;white-space:nowrap;font-size:11px;line-height:13px;color:#1e1e1e;letter-spacing:-0.046px;">Plan Amt</div>
<div class="a" style="left:205.84px;top:540px;width:700px;text-align:right;white-space:nowrap;font-size:11px;line-height:13px;color:#1e1e1e;letter-spacing:0.04px;">Paid Amt</div>
<div class="a" style="left:909.60px;top:540px;white-space:nowrap;font-size:11px;line-height:13px;color:#1e1e1e;letter-spacing:0.022px;">Satisfied Ind</div>
<div class="a" style="left:1014.20px;top:540px;white-space:nowrap;font-size:11px;line-height:13px;color:#1e1e1e;letter-spacing:0.134px;">Broken Ind</div>
<div class="a" style="left:1119.40px;top:540px;white-space:nowrap;font-size:11px;line-height:13px;color:#1e1e1e;letter-spacing:-0.295px;">Enabled</div>
<div class="a" style="left:273px;top:554px;width:951px;height:14px;background:#f6f7f9"></div>
<div class="a" style="left:273.90px;top:555px;white-space:nowrap;font-size:11px;line-height:13px;color:#333;letter-spacing:0.048px;">No data to display.</div>
<div class="a" style="left:273px;top:568px;width:951px;height:21px;background:#eef1f5"></div>
<div class="a" style="left:384px;top:569px;width:1px;height:20px;background:#dde2e8"></div>
<div class="a" style="left:228px;top:459px;width:7px;height:22px;background:#c6daf2;border:1px solid #a9bfd8"></div>
<svg class="a" style="left:229px;top:465px" width="5" height="9"><path d="M4.5,0V9L0,4.5Z" fill="#000"/></svg>
<div class="a" style="left:1256px;top:471px;width:7px;height:22px;background:#c6daf2;border:1px solid #a9bfd8"></div>
<svg class="a" style="left:1257px;top:477px" width="5" height="9"><path d="M4.5,0V9L0,4.5Z" fill="#000"/></svg>
</body></html>
